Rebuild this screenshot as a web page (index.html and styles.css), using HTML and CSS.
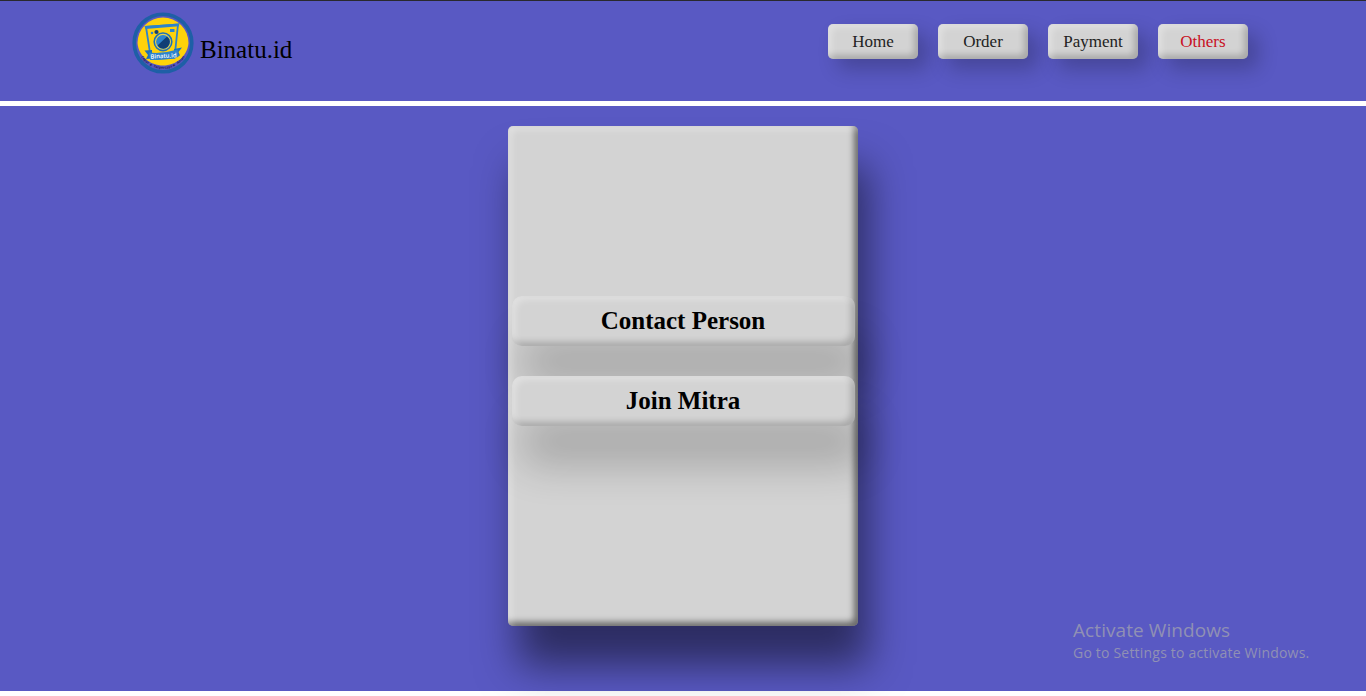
FILE: index.html
```html
<!DOCTYPE html>
<html lang="en">
<head>
<meta charset="utf-8">
<title>Binatu.id</title>
<link rel="stylesheet" href="styles.css">
</head>
<body>
<header class="header">
  <div class="brand">
    <svg class="logo" viewBox="0 0 62 62" role="img" aria-label="Binatu.id">
      <defs><path id="arc" d="M7.500 42A26 26 0 0 0 54.500 42"/></defs>
      <circle cx="31" cy="31" r="28.800" fill="#5858c2" stroke="#1e5fa6" stroke-width="3.600"/>
      <path d="M5.500 31A25.500 25.500 0 1 1 56.500 31C55.500 44 44 53.500 31 53.500S6.500 44 5.500 31Z" fill="#ffd20a"/>
      <path d="M14 15 46 12.500 42.500 46 19 47Z" fill="#ffd20a" stroke="#2d83cc" stroke-width="1.800"/>
      <path d="M12.500 14 47.500 11.500 46.800 14.200 13.500 17Z" fill="#2d83cc"/>
      <circle cx="20" cy="21" r="1.300" fill="#2d83cc"/>
      <circle cx="24.500" cy="20" r="2.100" fill="#153f73"/>
      <path d="M38 17h4.500v3h-4.500z" fill="#2d83cc"/>
      <circle cx="31" cy="29.800" r="8.800" fill="#e7d44d" stroke="#1e70b8" stroke-width="1.600"/>
      <circle cx="31" cy="29.800" r="6.900" fill="#2d83cc"/>
      <path d="M35 24.500A6.700 6.700 0 1 1 25.500 33.600Z" fill="#103e75"/>
      <path d="M12.500 38.500 20 38v8.500L14 47l2-4ZM50 35.500 42 37v8l6-1.500-1.500-3.500Z" fill="#1e70b8"/>
      <path d="M17 40.500Q31 42 45.500 37.500L46.500 45Q31 49 18 47.500Z" fill="#2d83cc"/>
      <text class="logo-name" x="31.500" y="46" text-anchor="middle" transform="rotate(-3 31 44)">Binatu.id</text>
      <text class="logo-motto"><textPath href="#arc" startOffset="50%" text-anchor="middle">Cepat ★ Terpercaya ★ Aman</textPath></text>
    </svg>
    <span class="brand-name">Binatu.id</span>
  </div>
  <nav class="nav">
    <a class="nav-link">Home</a>
    <a class="nav-link">Order</a>
    <a class="nav-link">Payment</a>
    <a class="nav-link nav-link-active">Others</a>
  </nav>
</header>
<main class="main">
  <section class="card">
    <h2 class="card-button">Contact Person</h2>
    <h2 class="card-button">Join Mitra</h2>
  </section>
</main>
<aside class="activation">
  <div class="activation-title">Activate Windows</div>
  <div class="activation-text">Go to Settings to activate Windows.</div>
</aside>
</body>
</html>
```

FILE: styles.css
```css
* { box-sizing: border-box; }
body {
  margin: 0;
  height: 696px;
  overflow: hidden;
  background: #fff;
  font-family: "Liberation Serif", "Times New Roman", serif;
  color: #000;
}
.header {
  display: flex;
  justify-content: space-between;
  height: 106px;
  padding: 0 118px 0 132px;
  background: #5959c3;
  border-top: 1px solid #29292e;
  border-bottom: 5px solid #fff;
}
.brand { display: flex; align-items: flex-start; gap: 6px; padding-top: 11px; }
.logo { width: 62px; height: 62px; }
.logo-name { font: 600 6px "Open Sans", sans-serif; fill: #fff; }
.logo-motto { font: bold 3.500px "Open Sans", sans-serif; fill: #24245e; }
.brand-name { font-size: 25px; line-height: 29px; margin-top: 23px; }
.nav { display: flex; gap: 20px; padding-top: 23px; }
.nav-link {
  width: 90px;
  height: 35px;
  border-radius: 5px;
  background: #d3d3d3;
  color: #222;
  font-size: 17px;
  line-height: 35px;
  text-align: center;
  box-shadow: 10px 10px 20px rgba(0,0,0,.22),
    inset 4px 4px 6px rgba(255,255,255,.3),
    inset -4px -4px 6px rgba(0,0,0,.2);
}
.nav-link-active { color: #c80f23; }
.main {
  display: flex;
  justify-content: center;
  height: 585px;
  padding-top: 20px;
  background: #5959c3;
}
.card {
  display: flex;
  flex-direction: column;
  justify-content: center;
  gap: 30px;
  width: 350px;
  height: 500px;
  padding: 0 3px 30px 4px;
  border-radius: 5px;
  background: #d3d3d3;
  box-shadow: 10px 40px 40px rgba(0,0,0,.5),
    inset 4px 4px 6px rgba(255,255,255,.3),
    inset -4px -4px 6px rgba(0,0,0,.5);
}
.card-button {
  height: 50px;
  margin: 0;
  padding-right: 1px;
  border-radius: 10px;
  background: #d3d3d3;
  font-size: 25px;
  line-height: 50px;
  text-align: center;
  box-shadow: 10px 40px 40px rgba(0,0,0,.2),
    inset 4px 4px 6px rgba(255,255,255,.3),
    inset -4px -4px 6px rgba(0,0,0,.2);
}
.activation {
  position: absolute;
  left: 1073px;
  top: 617px;
  color: #9090b4;
  font-family: "Open Sans", "Noto Sans", sans-serif;
  white-space: nowrap;
}
.activation-title { font-size: 19px; line-height: 26px; letter-spacing: .08px; }
.activation-text { font-size: 14px; line-height: 19px; letter-spacing: .2px; }
```
